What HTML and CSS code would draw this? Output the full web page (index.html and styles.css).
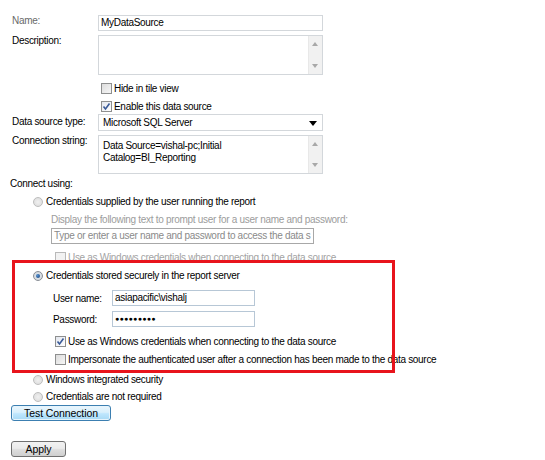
FILE: index.html
```html
<!DOCTYPE html>
<html>
<head>
<meta charset="utf-8">
<link rel="stylesheet" href="styles.css">
</head>
<body>
<div class="page">
  <div class="form">
    <div class="row r-name">
      <div class="label muted">Name:</div>
      <div class="box input">MyDataSource</div>
    </div>
    <div class="row r-desc">
      <div class="label">Description:</div>
      <div class="box area area-desc">
        <div class="area-text"></div>
        <div class="sb"><span class="up"></span><span class="down"></span></div>
      </div>
    </div>
    <div class="row r-hide">
      <div class="label"></div>
      <div class="check"><span class="cb"></span><span>Hide in tile view</span></div>
    </div>
    <div class="row r-enable">
      <div class="label"></div>
      <div class="check"><span class="cb on"><svg width="9" height="9" viewBox="0 0 9 9"><path d="M1.5 4.5 L3.5 7 L7.5 1.5" fill="none" stroke="#3a5a98" stroke-width="1.6"/></svg></span><span>Enable this data source</span></div>
    </div>
    <div class="row r-type">
      <div class="label">Data source type:</div>
      <div class="box select"><span>Microsoft SQL Server</span><span class="caret"></span></div>
    </div>
    <div class="row r-conn">
      <div class="label">Connection string:</div>
      <div class="box area area-conn">
        <div class="area-text">Data Source=vishal-pc;Initial<br>Catalog=BI_Reporting</div>
        <div class="sb"><span class="up"></span><span class="down"></span></div>
      </div>
    </div>
  </div>

  <div class="connect">
    <div class="heading">Connect using:</div>

    <div class="opt o1"><span class="rb"></span><span>Credentials supplied by the user running the report</span></div>
    <div class="sub">
      <div class="hint">Display the following text to prompt user for a user name and password:</div>
      <div class="box input prompt">Type or enter a user name and password to access the data s</div>
      <div class="check dis c-win1"><span class="cb disabled"></span><span>Use as Windows credentials when connecting to the data source</span></div>
    </div>

    <div class="opt o2"><span class="rb on"><span class="dot"></span></span><span>Credentials stored securely in the report server</span></div>
    <div class="sub">
      <div class="cred c-user"><span class="clabel">User name:</span><div class="box input cin">asiapacific\vishalj</div></div>
      <div class="cred c-pass"><span class="clabel">Password:</span><div class="box input cin pw">&#9679;&#9679;&#9679;&#9679;&#9679;&#9679;&#9679;&#9679;&#9679;</div></div>
      <div class="check c-win2"><span class="cb on"><svg width="9" height="9" viewBox="0 0 9 9"><path d="M1.5 4.5 L3.5 7 L7.5 1.5" fill="none" stroke="#3a5a98" stroke-width="1.6"/></svg></span><span>Use as Windows credentials when connecting to the data source</span></div>
      <div class="check c-imp"><span class="cb"></span><span>Impersonate the authenticated user after a connection has been made to the data source</span></div>
    </div>

    <div class="opt o3"><span class="rb"></span><span>Windows integrated security</span></div>
    <div class="opt o4"><span class="rb"></span><span>Credentials are not required</span></div>
  </div>

  <div class="buttons">
    <button class="btn btn-test">Test Connection</button>
    <button class="btn btn-apply">Apply</button>
  </div>

  <div class="highlight"></div>
</div>
</body>
</html>
```
FILE: styles.css
```css
html, body {
  margin: 0;
  padding: 0;
  background: #fff;
}
body {
  font-family: "Liberation Sans", Arial, sans-serif;
  font-size: 10px;
  letter-spacing: -0.3px;
  color: #000;
}
.page {
  position: relative;
  padding: 15px 0 0 0;
  height: 445px;
}
.form {
  padding-left: 12px;
}
.row {
  display: flex;
  align-items: flex-start;
}
.label {
  width: 86px;
  line-height: 12px;
  flex: none;
}
.muted { color: #6a6a6a; }
.box {
  box-sizing: border-box;
  border: 1px solid #d3d7db;
  background: #fff;
}
.input {
  height: 16px;
  width: 225px;
  line-height: 14px;
  padding: 0 2px;
  white-space: nowrap;
  overflow: hidden;
}
.r-desc { margin-top: 4px; }
.area {
  width: 225px;
  display: flex;
}
.area-desc { height: 40px; }
.area-conn { height: 39px; }
.area-text {
  flex: 1;
  padding: 4px 4px;
  line-height: 12px;
}
.sb {
  width: 13px;
  background: #f1f1f1;
  border-left: 1px solid #e8e8e8;
  position: relative;
}
.sb .up, .sb .down {
  position: absolute;
  left: 3px;
  width: 0;
  height: 0;
  border-left: 3.5px solid transparent;
  border-right: 3.5px solid transparent;
}
.sb .up { top: 6px; border-bottom: 4px solid #a8a8a8; }
.sb .down { bottom: 6px; border-top: 4px solid #a8a8a8; }

.r-hide { margin-top: 7px; }
.r-enable { margin-top: 5px; }
.r-type { margin-top: 1px; }
.r-type .label { padding-top: 2px; }
.r-conn { margin-top: 4px; }

.check {
  display: flex;
  align-items: center;
  height: 13px;
  line-height: 13px;
  white-space: nowrap;
}
.r-hide .check, .r-enable .check { padding-left: 3px; }
.cb {
  box-sizing: border-box;
  width: 11px;
  height: 11px;
  border: 1px solid #8e8f8f;
  background: linear-gradient(135deg, #dcdcdc, #f6f6f6);
  margin-right: 2px;
  display: inline-flex;
  align-items: center;
  justify-content: center;
  flex: none;
}
.cb.on { background: linear-gradient(135deg, #e2e6ee, #ffffff); }
.cb.disabled { border-color: #b9b9b9; background: #f2f2f2; }

.select {
  height: 17px;
  width: 225px;
  display: flex;
  align-items: center;
  justify-content: space-between;
  padding: 0 5px 0 4px;
  line-height: 15px;
}
.caret {
  width: 0;
  height: 0;
  border-left: 4px solid transparent;
  border-right: 4px solid transparent;
  border-top: 5px solid #000;
  margin-top: 1px;
}

.connect {
  padding-left: 10px;
  margin-top: 4px;
}
.heading {
  line-height: 12px;
}
.opt {
  display: flex;
  align-items: center;
  height: 13px;
  line-height: 13px;
  padding-left: 23px;
  white-space: nowrap;
}
.o1 { margin-top: 5px; }
.rb {
  box-sizing: border-box;
  width: 10px;
  height: 10px;
  border-radius: 50%;
  border: 1px solid #bdbdbd;
  background: radial-gradient(circle at 50% 50%, #f0f0f0 0%, #dadada 100%);
  margin-right: 3px;
  flex: none;
  display: inline-flex;
  align-items: center;
  justify-content: center;
}
.rb.on {
  border-color: #8a8f96;
  background: radial-gradient(circle at 50% 50%, #e8ecf0 0%, #c9cfd6 100%);
}
.rb .dot {
  width: 4px;
  height: 4px;
  border-radius: 50%;
  background: radial-gradient(circle at 35% 35%, #4f8fd2, #1c3f72);
}
.sub {
  padding-left: 41px;
  white-space: nowrap;
}
.hint {
  color: #9c9c9c;
  line-height: 12px;
  margin-top: 6px;
}
.prompt {
  margin-top: 2px;
  width: 263px;
  border-color: #a8a8a8;
  color: #8a8a8a;
}
.dis { color: #a3a3a3; }
.c-win1 { margin-top: 7px; padding-left: 4px; }
.o2 { margin-top: 5px; }
.cred {
  display: flex;
  align-items: center;
  padding-left: 2px;
}
.clabel {
  width: 59px;
  flex: none;
}
.c-user { margin-top: 8px; }
.c-pass { margin-top: 5px; }
.cin {
  width: 143px;
  height: 16px;
  border-color: #b7c7d6;
}
.pw { font-size: 7px; letter-spacing: 0.3px; line-height: 14px; }
.c-win2 { margin-top: 8px; padding-left: 4px; }
.c-imp { margin-top: 5px; padding-left: 4px; }
.o3 { margin-top: 7px; }
.o4 { margin-top: 4px; }

.buttons {
  padding-left: 11px;
  display: flex;
  flex-direction: column;
  align-items: flex-start;
}
.btn {
  font-family: "Liberation Sans", Arial, sans-serif;
  font-size: 10.5px;
  letter-spacing: -0.1px;
  color: #000;
  box-sizing: border-box;
  height: 16px;
  padding: 0;
  line-height: 14px;
  border-radius: 3px;
  border: 1px solid #707070;
  background: linear-gradient(#f2f2f2 0%, #ebebeb 45%, #dddddd 55%, #cfcfcf 100%);
}
.btn-test {
  width: 100px;
  margin-top: 2px;
  border-color: #3c7fb1;
  background: linear-gradient(#eaf6fd 0%, #d9f0fc 45%, #bee6fd 55%, #a7d9f5 100%);
  box-shadow: inset 0 0 0 1px #e6f4fc;
}
.btn-apply {
  width: 55px;
  margin-top: 20px;
}

.highlight {
  position: absolute;
  left: 12px;
  top: 260px;
  width: 377px;
  height: 107px;
  border: 3px solid #e8141c;
  pointer-events: none;
}
```
